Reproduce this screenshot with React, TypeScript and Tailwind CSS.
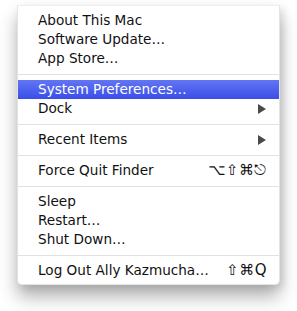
import React from "react";

type Item =
  | { kind: "item"; label: string; shortcut?: string; submenu?: boolean; active?: boolean }
  | { kind: "sep" };

const items: Item[] = [
  { kind: "item", label: "About This Mac" },
  { kind: "item", label: "Software Update…" },
  { kind: "item", label: "App Store…" },
  { kind: "sep" },
  { kind: "item", label: "System Preferences…", active: true },
  { kind: "item", label: "Dock", submenu: true },
  { kind: "sep" },
  { kind: "item", label: "Recent Items", submenu: true },
  { kind: "sep" },
  { kind: "item", label: "Force Quit Finder", shortcut: "⌥⇧⌘⎋" },
  { kind: "sep" },
  { kind: "item", label: "Sleep" },
  { kind: "item", label: "Restart…" },
  { kind: "item", label: "Shut Down…" },
  { kind: "sep" },
  { kind: "item", label: "Log Out Ally Kazmucha…", shortcut: "⇧⌘Q" },
];

function Arrow() {
  return (
    <svg width="8" height="10" viewBox="0 0 8 10" className="block mr-[1px]">
      <path d="M0 0 L8 5 L0 10 Z" fill="#4a4a4a" />
    </svg>
  );
}

export default function App() {
  return (
    <div
      className="w-[297px] h-[311px] bg-white pt-[5px] pl-[17px]"
      style={{ fontFamily: '"DejaVu Sans", Verdana, sans-serif' }}
    >
      <div className="w-[263px] bg-white border border-[#e4e4e4] border-t-[#efefef] rounded-b-[5px] pt-[5px] pb-[4px] shadow-[0_12px_18px_rgba(0,0,0,0.3),3px_3px_8px_rgba(0,0,0,0.1)]">
        {items.map((it, i) =>
          it.kind === "sep" ? (
            <div key={i} className="h-[12px] flex items-center">
              <div className="w-full h-px bg-[#e2e2e2]" />
            </div>
          ) : (
            <div
              key={i}
              className={
                "h-[19px] flex items-center pl-[20px] pr-[12px] text-[13.6px] leading-none " +
                (it.active
                  ? "text-white bg-gradient-to-b from-[#6275f3] to-[#3b4de8]"
                  : "text-[#111]")
              }
            >
              <span className="flex-1 whitespace-nowrap">{it.label}</span>
              {it.shortcut && (
                <span className="whitespace-nowrap text-[15px] tracking-[0.5px]">{it.shortcut}</span>
              )}
              {it.submenu && <Arrow />}
            </div>
          )
        )}
      </div>
    </div>
  );
}
